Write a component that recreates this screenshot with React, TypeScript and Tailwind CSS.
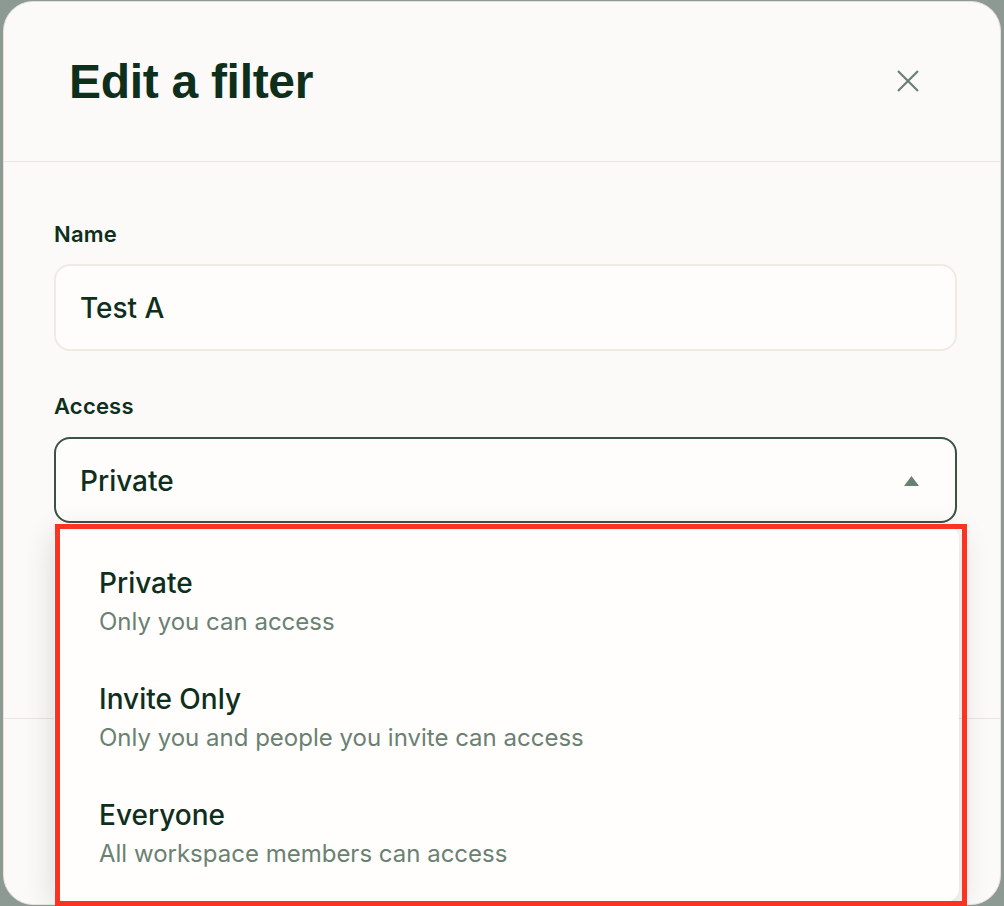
import React from "react";

const items = [
  { title: "Private", sub: "Only you can access" },
  { title: "Invite Only", sub: "Only you and people you invite can access" },
  { title: "Everyone", sub: "All workspace members can access" },
];

export default function App() {
  return (
    <div
      className="relative w-[1004px] h-[906px] bg-[#8c9a93] pl-[3px] pt-[1px] pr-[3px] overflow-hidden"
      style={{ fontFamily: "Inter, 'Noto Sans', sans-serif" }}
    >
      <div className="relative w-[998px] h-[904px] rounded-[30px] bg-[#fbfaf8] border border-[#e6e0d6] flex flex-col overflow-hidden">
        {/* Header */}
        <div className="h-[160px] shrink-0 flex items-center justify-between pl-[65px] pr-[80px] border-b border-[#ebe5dd]">
          <h1
            className="text-[48px] font-bold text-[#0e2f1c] tracking-[-0.3px] leading-none mt-[1px]"
            style={{ fontFamily: "'Liberation Sans', Arial, sans-serif" }}
          >
            Edit a filter
          </h1>
          <svg width="24" height="24" viewBox="0 0 24 24" className="-mt-[1px]">
            <path d="M2 2 L22 22 M22 2 L2 22" stroke="#6a8172" strokeWidth="2.2" strokeLinecap="butt" />
          </svg>
        </div>

        {/* Body */}
        <div className="flex flex-col pl-[50px] pr-[43px] pt-[58px]">
          <label className="text-[22px] font-semibold text-[#0e2f1c] leading-[28px] tracking-[0.2px]">Name</label>
          <div className="mt-[16px] h-[87px] rounded-[16px] border-2 border-[#efeae2] bg-[#fefdfc] flex items-center px-[24px]">
            <span className="text-[28px] text-[#0e2f1c] font-medium">Test A</span>
          </div>

          <label className="mt-[41px] text-[22px] font-semibold text-[#0e2f1c] leading-[28px] tracking-[0.2px]">Access</label>
          <div className="mt-[17px] h-[86px] rounded-[16px] border-2 border-[#3c5245] bg-[#fefdfc] flex items-center justify-between pl-[24px] pr-[36px]">
            <span className="text-[28px] text-[#0e2f1c] font-medium mt-[1px]">Private</span>
            <svg width="15" height="10" viewBox="0 0 15 10" className="mt-[1px]">
              <path d="M7.5 0 L15 10 L0 10 Z" fill="#6a8172" />
            </svg>
          </div>
        </div>

        {/* Footer */}
        <div className="mt-auto h-[186px] border-t border-[#ebe5dd]" />

        {/* Dropdown */}
        <div className="absolute left-[50px] top-[523px] w-[905px] h-[377px] rounded-[14px] bg-[#fffefd] shadow-[0_8px_32px_rgba(0,0,0,0.14)] flex flex-col pt-[19px] pl-[45px]">
          {items.map((it) => (
            <div key={it.title} className="flex flex-col pt-[22px] pb-[23px]">
              <span className="text-[28px] leading-[34px] font-medium text-[#0e2f1c]">{it.title}</span>
              <span className="mt-[7px] text-[24px] leading-[30px] text-[#6a8172]">{it.sub}</span>
            </div>
          ))}
        </div>
      </div>

      {/* Annotation outline */}
      <div className="absolute left-[55px] top-[524px] w-[912px] h-[382px] border-[5px] border-[#fa3322] pointer-events-none" />
    </div>
  );
}
